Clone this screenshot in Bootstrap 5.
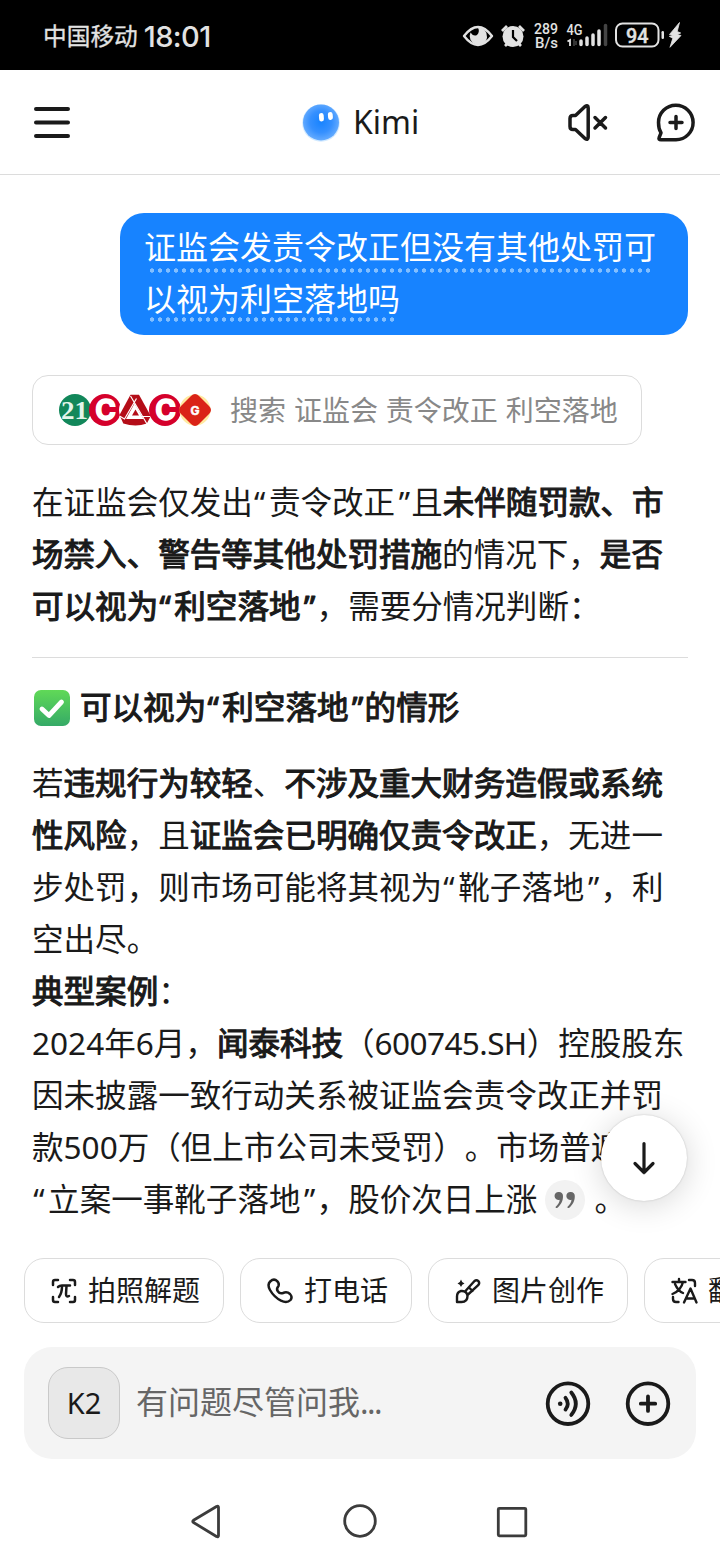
<!DOCTYPE html>
<html lang="zh-CN">
<head>
<meta charset="utf-8">
<meta name="viewport" content="width=device-width, initial-scale=1">
<title>Kimi</title>
<link href="https://cdn.jsdelivr.net/npm/bootstrap@5.3.0/dist/css/bootstrap.min.css" rel="stylesheet">
<style>
html,body{height:1560px;overflow:hidden}
body{width:720px;margin:0;background:#fff;color:#1a1a1a;font-family:"Noto Sans","Noto Sans CJK SC",sans-serif;text-spacing-trim:space-all}
svg{display:block;flex:none;overflow:visible}
.ink{fill:none;stroke:#1a1a1a;stroke-linecap:round;stroke-linejoin:round}
.statusbar{height:70px;background:#000;color:#e2e2e2;padding:2px 38px 0 43px}
.carrier{font-size:23.7px;line-height:1;padding-top:1px;-webkit-text-stroke:.3px #e2e2e2}
.clock{font:500 29px/1 Inter,"Noto Sans",sans-serif;letter-spacing:-.6px;margin-left:6px}
.appbar{height:105px;border-bottom:1px solid #dcdcdc;padding:0 24px 0 34px}
.brand{font-size:32px;line-height:1}
.chat{height:1068px;padding:38px 32px 0}
.bubble{width:568px;height:122px;border-radius:24px;background:#1783ff;color:#fff;padding:8px 24px;font-size:32px}
.bline{position:relative;height:52px;line-height:52px;white-space:nowrap}
.bline::after{content:"";position:absolute;left:4px;top:47px;width:504px;height:5px;background:radial-gradient(circle at 4px 2.500px,#83bfff 1.9px,transparent 2.500px) 0 0/8px 5px repeat-x}
.bline.second::after{top:44px;width:248px}
.search{width:610px;height:70px;margin-top:40px;border:1px solid #dcdcdc;border-radius:16px;padding:0 0 0 26px;color:#888;font-size:28px;line-height:1}
.search .label{margin-left:18px;word-spacing:.6px}
.txt{font-size:31.55px}
.txt>div,.head{height:52px;line-height:50px;white-space:nowrap}
.txt b,.head span{font-weight:400;-webkit-text-stroke:1.1px #1a1a1a}
.qo{padding:0 3.6px 0 1.2px}
.qc{padding:0 1.2px 0 3.6px}
.code{letter-spacing:-.6px}
.rule{height:1px;background:#dcdcdc}
.cite{width:40px;height:40px;border-radius:50%;background:#f2f2f2;display:inline-flex;vertical-align:-9px;margin:0 9px 0 8px;line-height:1}
.down{position:absolute;left:601px;top:1115px;width:86px;height:86px;background:#fff;border-radius:50%;box-shadow:0 4px 32px rgba(0,0,0,.16),0 0 2px rgba(0,0,0,.2)}
.chips{padding:15px 0 0 24px;gap:16px;height:80px;overflow:hidden}
.chip{flex:none;height:65px;border:1px solid #dcdcdc;border-radius:20px;padding:0 24px 2px 25px;gap:10px;font-size:28px;line-height:1;white-space:nowrap}
.chip svg{margin-top:2px}
.w200{width:200px}.w172{width:172px}
.composer{margin:24px 24px 0;height:112px;border-radius:28px;background:#f4f4f4;padding:0 25px 0 24px}
.model{width:72px;height:72px;border:1px solid #c9c9c9;border-radius:20px;background:#e8e8e8;font-size:29px}
.hint{font-size:32px;line-height:1;color:#666;margin:0 0 2px 16px}
.sysnav{height:101px;padding:28px 0 0 190px}
</style>
</head>
<body class="position-relative">
<header class="statusbar d-flex align-items-center">
  <span class="carrier">中国移动</span><span class="clock">18:01</span>
  <svg class="ms-auto" width="220" height="34" viewBox="462 19 220 34" fill="#e2e2e2" font-family="Roboto,sans-serif">
    <path d="M464 36Q478 18 492 36Q478 54 464 36Z" fill="none" stroke="#e2e2e2" stroke-width="2.4" stroke-linejoin="round"/>
    <path d="M478 27.500a8.700 8.700 0 1 1-7.500 5q3 4.500 6.500 2.500 3-3 1-7.500Z"/>
    <circle cx="513" cy="36.500" r="10.500"/><path d="M502 31l5-5M524 31l-5-5M505 46l3-3M521 46l-3-3" stroke="#e2e2e2" stroke-width="2.800"/><path d="M513 30v7l4 4" fill="none" stroke="#000" stroke-width="2.200"/>
    <text x="534" y="33.500" font-size="14.500" font-weight="500" textLength="24" lengthAdjust="spacingAndGlyphs">289</text>
    <text x="535" y="48" font-size="14" font-weight="500" textLength="23" lengthAdjust="spacingAndGlyphs">B/s</text>
    <text x="566.500" y="34.500" font-size="14.500" font-weight="500" textLength="16" lengthAdjust="spacingAndGlyphs">4G</text>
    <path d="M567.500 41.500l2.500-1.500v6" fill="none" stroke="#e2e2e2" stroke-width="1.800"/>
    <path d="M574 39v7M576 41v4" stroke="#444" stroke-width="1.500"/>
    <path d="M581 41v3.500M587 38v6.500M593 35v9.500M599 31v13.500" stroke="#e2e2e2" stroke-width="3.500" stroke-linecap="round"/>
    <path d="M605.500 25.500v19" stroke="#444" stroke-width="3.500" stroke-linecap="round"/>
    <rect x="616" y="23.500" width="42.500" height="23" rx="6.500" fill="none" stroke="#e2e2e2" stroke-width="2"/>
    <rect x="661.500" y="31" width="2.500" height="8" rx="1.200"/>
    <text x="626" y="43" font-size="21" font-weight="500" textLength="22.500" lengthAdjust="spacingAndGlyphs" stroke="#e2e2e2" stroke-width=".4">94</text>
    <path d="M679.500 22.500L669.500 34.500l3.800 1-4 .8 3.500 2-2.800 9L681 35.500l-3.800-1 3.500-1.500-3.500-1.500Z" stroke="#e2e2e2" stroke-width=".8"/>
  </svg>
</header>
<nav class="appbar d-flex align-items-center justify-content-between position-relative">
  <svg width="36" height="32" viewBox="34 106 36 32"><path class="ink" stroke-width="4" d="M36 109H68M36 122.500H68M36 136H68"/></svg>
  <div class="brand position-absolute d-flex align-items-center" style="left:302px;top:32px">
    <svg width="38" height="40" viewBox="302 103 38 40"><defs><radialGradient id="ball" cx=".5" cy=".48" r=".55"><stop offset="0" stop-color="#1783ff"/><stop offset=".55" stop-color="#3590ff"/><stop offset="1" stop-color="#6bafff"/></radialGradient></defs><circle cx="321" cy="124" r="18.800" fill="#d3eaff"/><circle cx="321" cy="123.400" r="18" fill="url(#ball)"/><rect x="319" y="114" width="4.800" height="8.500" rx="2.400" fill="#fff" transform="rotate(-4 321 118)"/><rect x="328" y="113" width="4.800" height="8" rx="2.400" fill="#fff" transform="rotate(-5 330 117)"/></svg>
    <span style="margin-left:13px">Kimi</span>
  </div>
  <svg width="128" height="40" viewBox="568 102 128 40"><g class="ink" stroke-width="3.500">
    <path d="M573 115.500h2.500L585 106.500q3.200-2 3.200 1.500v29q0 3.500-3.200 1.500l-9.500-9H573q-3 0-3-3v-8q0-3 3-3ZM595 117.500l10.500 10.500M605.500 117.500L595 128"/>
    <path d="M676 139.800H661q-2.800 0-1.800-2.500l1.800-4.500Q658.500 129 658.500 122.500A17.300 17.300 0 1 1 676 139.800ZM676 116.500v12M670 122.500h12" /></g>
  </svg>
</nav>
<main class="chat">
  <div class="bubble ms-auto"><div class="bline">证监会发责令改正但没有其他处罚可</div><div class="bline second">以视为利空落地吗</div></div>
  <div class="search d-flex align-items-center">
    <svg width="153" height="32" viewBox="59 394 153 32" font-weight="700" text-anchor="middle">
      <circle cx="75" cy="410" r="16" fill="#12875a"/><text x="74.500" y="419" font-family="Liberation Serif" font-size="26" fill="#e4f5ea" textLength="27" lengthAdjust="spacingAndGlyphs">21</text>
      <circle cx="105" cy="410" r="16" fill="#d5002b"/><text x="105.500" y="420" font-family="Inter" font-size="28" fill="#fff" stroke="#fff" stroke-width="1.500">C</text>
      <circle cx="135" cy="410" r="16" fill="#fff"/><path d="M130.500 394.800h8.500L150.800 416l-4 7.500q-11 4-23.500 0L119.500 415Z" fill="#b40d18"/><path d="M134.500 403.500l9 15.500h-17.500Z" fill="#fff"/><path d="M135.500 409.500l3.500 6h-7Z" fill="#b40d18"/><path d="M130.500 396l16.500 28M119.500 416l5 3 12-20.500M150.500 416.500h-20" fill="none" stroke="#fff" stroke-width="1.200"/>
      <circle cx="165" cy="410" r="16" fill="#d5002b"/><text x="165.500" y="420" font-family="Inter" font-size="28" fill="#fff" stroke="#fff" stroke-width="1.500">C</text>
      <circle cx="195" cy="410" r="15.500" fill="#ffe9a0"/><path d="M191 396q4-4 8 0l10 10q4 4 0 8l-10 10q-4 4-8 0L181 414q-4-4 0-8Z" fill="#da2317"/><text x="195" y="414.500" font-family="Inter" font-size="12" fill="#fff" stroke="#fff" stroke-width=".5">G</text>
    </svg>
    <span class="label">搜索 证监会 责令改正 利空落地</span>
  </div>
  <section class="txt" style="margin-top:32px">
    <div>在证监会仅发出<span class="qo">“</span>责令改正<span class="qc">”</span>且<b>未伴随罚款、市</b></div>
    <div><b>场禁入、警告等其他处罚措施</b>的情况下，<b>是否</b></div>
    <div><b>可以视为<span class="qo">“</span>利空落地<span class="qc">”</span></b>，需要分情况判断：</div>
  </section>
  <div class="rule" style="margin-top:24px"></div>
  <h2 class="head d-flex align-items-center txt mb-0" style="margin-top:24px">
    <svg width="36" height="36" viewBox="0 0 36 36" style="margin:0 10px 0 2px"><defs><linearGradient id="ok" x2="0" y2="1"><stop stop-color="#60d957"/><stop offset="1" stop-color="#35aa67"/></linearGradient></defs><rect width="36" height="36" rx="7" fill="url(#ok)"/><path d="M8 19l7 6.500L27.500 12" fill="none" stroke="#fff" stroke-width="4.800" stroke-linecap="round" stroke-linejoin="round"/></svg><span style="padding-bottom:2px">可以视为<i class="qo fst-normal">“</i>利空落地<i class="qc fst-normal">”</i>的情形</span>
  </h2>
  <section class="txt" style="margin-top:24px">
    <div>若<b>违规行为较轻</b>、<b>不涉及重大财务造假或系统</b></div>
    <div><b>性风险</b>，且<b>证监会已明确仅责令改正</b>，无进一</div>
    <div>步处罚，则市场可能将其视为<span class="qo">“</span>靴子落地<span class="qc">”</span>，利</div>
    <div>空出尽。</div>
    <div><b>典型案例</b>：</div>
    <div>2024年6月，<b>闻泰科技</b>（<span class="code">600745.SH</span>）控股股东</div>
    <div>因未披露一致行动关系被证监会责令改正并罚</div>
    <div>款500万（但上市公司未受罚）。市场普遍认为</div>
    <div><span class="qo">“</span>立案一事靴子落地<span class="qc">”</span>，股价次日上涨<span class="cite"><svg width="40" height="40" viewBox="0 0 40 40" fill="#666"><path id="qt" d="M14 12a4 4 0 0 1 4 4.500c0 5-2.500 8.500-5.500 11.200q-1.800 1-2-.7c2.500-2.500 4-4.500 4.200-7.200A4 4 0 1 1 14 12Z"/><use href="#qt" x="11.800"/></svg></span>。</div>
  </section>
</main>
<button class="down btn p-0 border-0 d-flex align-items-center justify-content-center" aria-label="向下"><svg width="22" height="34" viewBox="0 0 22 34"><path class="ink" stroke-width="3.200" d="M11 2.500v29M2 22.500l9 9 9-9"/></svg></button>
<div class="chips d-flex">
  <div class="chip w200 d-flex align-items-center"><svg width="28" height="28" viewBox="0 0 28 28"><path class="ink" stroke-width="2.500" d="M3 8V5q0-2 2-2h3M20 3h3q2 0 2 2v3M25 20v3q0 2-2 2h-3M8 25H5q-2 0-2-2v-3M8 10q1.500-1.500 4-1.500h8M12 9q0 7-3 11M16.500 9l-.5 8q0 3.500 3 2"/></svg>拍照解题</div>
  <div class="chip w172 d-flex align-items-center"><svg width="28" height="28" viewBox="0 0 28 28"><path class="ink" stroke-width="2.500" d="M4.200 4.500Q8 1 11.200 4.200q2.300 2.500 1.300 4.800-2.500 2.800-.7 5.200 2 3 5.200 1.800 4-1.800 7 1 2.800 3 .5 6-3.500 3.700-9.500.7-7-3.700-11-10.700-3-5.500.2-8.500Z"/></svg>打电话</div>
  <div class="chip w200 d-flex align-items-center"><svg width="28" height="28" viewBox="0 0 28 28"><path class="ink" stroke-width="2.400" d="M3 25v-5.500q0-4.500 4-5.500 6-.5 6.500 5 0 6-6 6ZM11 14.500L20.500 4q2-1.500 4 .2 1.500 1.800-.3 4L13.500 18M15 10.500l3.500 3.500"/><path d="M7 2.500q.8 3.300 3.500 4-2.700.7-3.500 3.500-.8-2.800-3.500-3.500 2.700-.7 3.500-4Z" fill="#1a1a1a"/></svg>图片创作</div>
  <div class="chip w200 d-flex align-items-center"><svg width="28" height="28" viewBox="0 0 28 28"><path class="ink" stroke-width="2.400" d="M2.500 5h13M9 2v3M13 5q-2 8.500-10.500 12M5 7q3 7 8 9M19 3h3q3 0 3 3v3M3 20v2q0 3 3 3h2.500M14 25.500l6.500-14 6 14M16 21.500h8.500"/></svg>翻译</div>
</div>
<footer>
  <div class="composer d-flex align-items-center">
    <div class="model d-flex align-items-center justify-content-center">K2</div><span class="hint">有问题尽管问我<span style="letter-spacing:-1.6px">...</span></span>
    <svg class="ms-auto" width="126" height="46" viewBox="545 1380 126 46"><g class="ink" stroke-width="3.800"><circle cx="568" cy="1403.700" r="20.300"/><circle cx="648" cy="1403.700" r="20.300"/><path d="M648 1396.500v14.400M640.800 1403.700h14.400M565.500 1397.800q4.500 5.900 0 11.800M571.300 1392.500q9 11.200 0 22.400"/></g><circle cx="560.200" cy="1403.700" r="2.300" fill="#1a1a1a"/></svg>
  </div>
  <div class="sysnav d-flex"><svg width="340" height="70" viewBox="190 1487 340 70"><g fill="none" stroke="#3c3c3c" stroke-width="2.800" stroke-linejoin="round"><path d="M193.500 1520.300q-1.500 1.300 0 2.200l23 14q2 .8 2-1v-28q0-1.800-2-1Z"/><circle cx="360" cy="1521" r="15.300"/><rect x="498.300" y="1508.300" width="27.500" height="27.500" rx="1"/></g></svg></div>
</footer>
</body>
</html>
